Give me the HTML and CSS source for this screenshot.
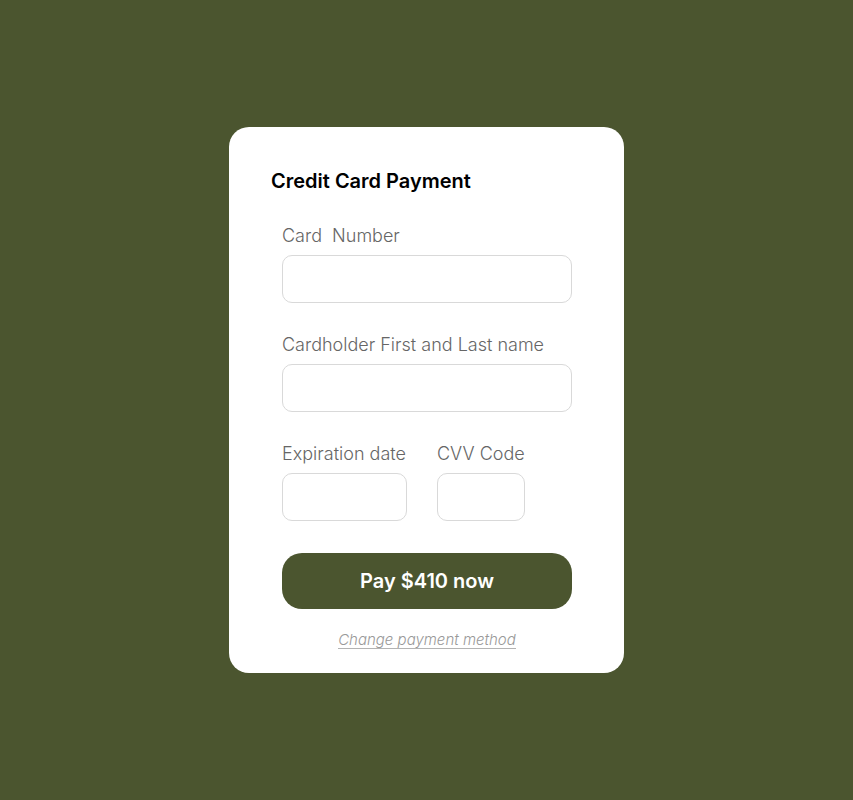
FILE: index.html
```html
<!DOCTYPE html>
<html lang="en">
<head>
<meta charset="utf-8">
<meta name="viewport" content="width=device-width, initial-scale=1">
<title>Credit Card Payment</title>
<link rel="stylesheet" href="styles.css">
</head>
<body>
<main class="card">
  <h1 class="title">Credit Card Payment</h1>
  <form class="form">
    <div class="field">
      <label for="number">Card&nbsp; Number</label>
      <input id="number" type="text" inputmode="numeric" autocomplete="cc-number">
    </div>
    <div class="field">
      <label for="name">Cardholder First and Last name</label>
      <input id="name" type="text" autocomplete="cc-name">
    </div>
    <div class="row">
      <div class="field expiry">
        <label for="expiry">Expiration date</label>
        <input id="expiry" type="text" autocomplete="cc-exp">
      </div>
      <div class="field cvv">
        <label for="cvv">CVV Code</label>
        <input id="cvv" type="text" inputmode="numeric" autocomplete="cc-csc">
      </div>
    </div>
    <div class="actions">
      <button class="pay" type="button">Pay $410 now</button>
      <a class="change" href="#">Change payment method</a>
    </div>
  </form>
</main>
</body>
</html>
```
FILE: styles.css
```css
* {
  box-sizing: border-box;
}

body {
  margin: 0;
  min-height: 100vh;
  display: flex;
  align-items: center;
  justify-content: center;
  background: #4b552f;
  font-family: Inter, "Liberation Sans", sans-serif;
}

.card {
  width: 100%;
  max-width: 395px;
  padding: 40px 52px 24px 42px;
  border-radius: 20px;
  background: #fff;
}

.title {
  margin: 0 0 27px;
  font-size: 20px;
  line-height: 28px;
  font-weight: 600;
  color: #000;
}

.form {
  display: flex;
  flex-direction: column;
  gap: 28px;
  padding-left: 11px;
}

.field {
  display: flex;
  flex-direction: column;
  gap: 5px;
}

label {
  font-size: 18px;
  line-height: 28px;
  font-weight: 300;
  color: #666;
  white-space: nowrap;
}

input {
  width: 100%;
  height: 48px;
  padding: 0 14px;
  border: 1px solid #d9d9d9;
  border-radius: 10px;
  background: #fff;
  font: inherit;
  font-size: 18px;
}

.row {
  display: flex;
  gap: 30px;
}

.expiry {
  width: 125px;
}

.cvv {
  width: 88px;
}

.actions {
  display: flex;
  flex-direction: column;
  gap: 22px;
  padding-top: 4px;
}

.pay {
  height: 56px;
  border: 0;
  border-radius: 20px;
  background: #4b552f;
  color: #fff;
  font: inherit;
  font-size: 20px;
  font-weight: 600;
  cursor: pointer;
}

.change {
  align-self: center;
  font-size: 15px;
  line-height: 17px;
  font-weight: 300;
  font-style: italic;
  color: #999;
  text-decoration: none;
  border-bottom: 1px solid #b3b3b3;
}
```
